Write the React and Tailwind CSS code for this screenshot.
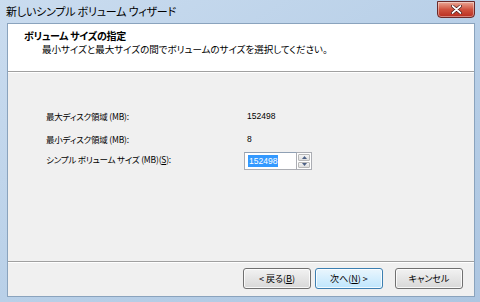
import React from "react";

const jp = "font-['Noto_Sans_CJK_JP','Noto_Sans',sans-serif] [font-feature-settings:'palt']";

function Btn({ children, primary }) {
  return (
    <div
      className={
        "w-[68px] h-[21px] rounded-[3px] border flex items-center justify-center text-[9px] text-black " +
        (primary
          ? "border-[#3c7fb1] bg-gradient-to-b from-[#eaf6fd] to-[#bee6fd] shadow-[inset_0_0_0_1px_rgba(255,255,255,0.8)]"
          : "border-[#707070] bg-gradient-to-b from-[#f2f2f2] to-[#d8d8d8] shadow-[inset_0_0_0_1px_rgba(255,255,255,0.8)]")
      }
    >
      {children}
    </div>
  );
}

export default function App() {
  return (
    <div className={"w-[480px] h-[302px] overflow-hidden flex flex-col bg-gradient-to-br from-[#cadcef] via-[#b9d0e8] to-[#adc6e1] " + jp}>
      {/* title bar */}
      <div className="h-[23px] flex items-start pl-[6px] pr-[5px] relative">
        <span className="mt-[4px] text-[11px] leading-[14px] tracking-[-0.2px] text-black">新しいシンプル ボリューム ウィザード</span>
        <div className="ml-auto w-[38px] h-[17px] mt-[1px] rounded-b-[4px] border border-[#6b2a2a] bg-gradient-to-b from-[#e9a695] via-[#d0523f] to-[#b82c1f] flex items-center justify-center shadow-[inset_0_0_0_1px_rgba(255,255,255,0.4)]">
          <svg width="11" height="9" viewBox="0 0 11 9">
            <path d="M1.5 1 L9.5 8 M9.5 1 L1.5 8" stroke="#3a1010" strokeWidth="3" strokeLinecap="round" />
            <path d="M1.5 1 L9.5 8 M9.5 1 L1.5 8" stroke="#ffffff" strokeWidth="1.7" strokeLinecap="round" />
          </svg>
        </div>
      </div>
      {/* client */}
      <div className="flex-1 ml-[7px] mr-[5px] mb-[5px] border border-[#8aa3bd] flex flex-col bg-[#f0f0f0]">
        <div className="h-[48px] bg-white border-b border-[#a0a0a0] pl-[16px] pt-[5px]">
          <div className="text-[10px] leading-[14px] font-bold tracking-[-0.3px] text-black">ボリューム サイズの指定</div>
          <div className="pl-[18px] text-[9.5px] leading-[13px] text-black">最小サイズと最大サイズの間でボリュームのサイズを選択してください。</div>
        </div>
        <div className="flex-1 border-t border-white border-b border-b-[#a0a0a0] pl-[38px] pt-[35px] text-[8.5px] tracking-[-0.2px] text-black">
          <div className="flex items-center h-[16px]">
            <span className="w-[201px]">最大ディスク領域 (MB):</span>
            <span className="font-['Liberation_Sans',sans-serif] text-[8.5px] tracking-normal">152498</span>
          </div>
          <div className="flex items-center h-[16px] mt-[7px]">
            <span className="w-[201px]">最小ディスク領域 (MB):</span>
            <span className="font-['Liberation_Sans',sans-serif] text-[8.5px] tracking-normal">8</span>
          </div>
          <div className="flex items-center h-[18px] mt-[5px]">
            <span className="w-[198px] -mt-[3px]">
              シンプル ボリューム サイズ (MB)(<span className="underline">S</span>):
            </span>
            <div className="flex h-[18px]">
              <div className="w-[53px] h-[18px] border border-[#abadb3] border-t-[#8fa0b4] bg-white flex items-center pl-[3px]">
                <span className="bg-[#3399ff] text-white px-[1px] leading-[12px] font-['Liberation_Sans',sans-serif] text-[8.5px] tracking-normal">152498</span>
              </div>
              <div className="w-[15px] flex flex-col border border-l-0 border-[#abadb3] bg-white p-[1px] gap-[1px]">
                <div className="flex-1 rounded-[1px] border border-[#b8b8b8] bg-gradient-to-b from-[#f4f4f4] to-[#dedede] flex items-center justify-center">
                  <svg width="5" height="3" viewBox="0 0 5 3"><path d="M0 3 L2.5 0 L5 3 Z" fill="#4d6185" /></svg>
                </div>
                <div className="flex-1 rounded-[1px] border border-[#b8b8b8] bg-gradient-to-b from-[#f4f4f4] to-[#dedede] flex items-center justify-center">
                  <svg width="5" height="3" viewBox="0 0 5 3"><path d="M0 0 L2.5 3 L5 0 Z" fill="#4d6185" /></svg>
                </div>
              </div>
            </div>
          </div>
        </div>
        <div className="h-[34px] border-t border-white flex items-start pt-[5px] pl-[235px]">
          <Btn>&lt; 戻る(<span className="underline">B</span>)</Btn>
          <div className="ml-[4px]"><Btn primary>次へ(<span className="underline">N</span>) &gt;</Btn></div>
          <div className="ml-[12px]"><Btn>キャンセル</Btn></div>
        </div>
      </div>
    </div>
  );
}
